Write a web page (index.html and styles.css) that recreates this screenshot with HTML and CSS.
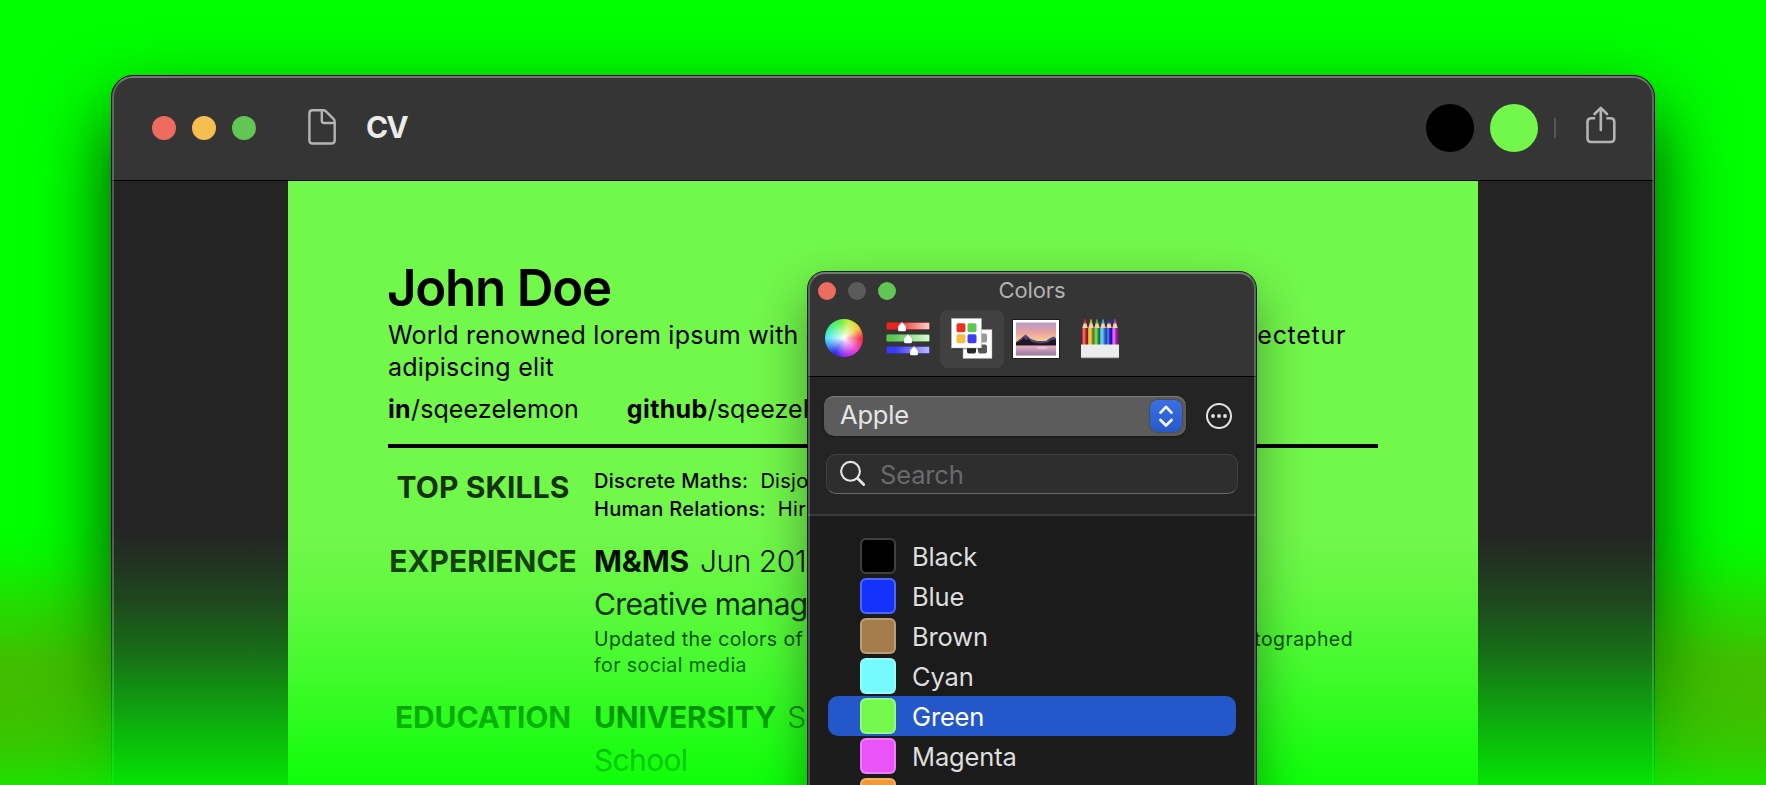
FILE: index.html
```html
<!DOCTYPE html>
<html lang="en">
<head>
<meta charset="utf-8">
<title>CV</title>
<link rel="stylesheet" href="styles.css">
</head>
<body>
<main class="stage">
  <section class="window">
    <header class="titlebar">
      <div class="lights"><i class="red"></i><i class="yellow"></i><i class="green"></i></div>
      <svg class="doc-icon" width="28" height="36" viewBox="0 0 28 36" fill="none" stroke="#b4b4b4" stroke-width="2.4" stroke-linejoin="round"><path d="M4.600 1.300H15.500C16.500 1.300 17.300 1.600 18 2.300L25.700 10.200C26.400 10.900 26.700 11.700 26.700 12.700V31.300Q26.700 34.500 23.500 34.500H4.600Q1.400 34.500 1.400 31.300V4.500Q1.400 1.300 4.600 1.300Z"/><path d="M13.800 1.500V11.400Q13.800 14 16.400 14H26.500"/></svg>
      <h1 class="window-title">CV</h1>
      <div class="tools">
        <span class="dot black"></span>
        <span class="dot lime"></span>
        <span class="divider"></span>
        <svg class="share-icon" width="30" height="38" viewBox="0 0 30 38" fill="none" stroke="#b4b4b4" stroke-width="2.600" stroke-linecap="round" stroke-linejoin="round"><path d="M9.200 12.300H5.300Q1.500 12.300 1.500 16V32.200Q1.500 36 5.300 36H24.500Q28.300 36 28.300 32.200V16Q28.300 12.300 24.500 12.300H20.400" stroke-linecap="butt"/><path d="M14.800 24V2.200M8.600 8L14.800 1.800L21 8"/></svg>
      </div>
    </header>
    <div class="canvas">
      <article class="page">
        <h2 class="name">John Doe</h2>
        <p class="intro"><span class="spread"><span>World renowned lorem ipsum with dolor sit</span><span class="tail">consectetur</span></span>adipiscing elit</p>
        <p class="links"><span><b>in</b>/sqeezelemon</span><span><b>github</b>/sqeezelemon</span></p>
        <hr class="rule">
        <div class="row skills">
          <h3 class="label">TOP SKILLS</h3>
          <div class="details">
            <p><b>Discrete Maths:</b><span>Disjoint sets</span></p>
            <p><b>Human Relations:</b><span>Hiring</span></p>
          </div>
        </div>
        <div class="row experience">
          <h3 class="label">EXPERIENCE</h3>
          <div class="details">
            <p class="heading"><b>M&amp;MS</b><span>Jun 2017</span></p>
            <p class="role">Creative manager</p>
            <p class="note"><span class="spread"><span>Updated the colors of candy</span><span>photographed</span></span>for social media</p>
          </div>
        </div>
        <div class="row education">
          <h3 class="label">EDUCATION</h3>
          <div class="details">
            <p class="heading"><b>UNIVERSITY</b><span>Sciences</span></p>
            <p class="role">School</p>
          </div>
        </div>
      </article>
    </div>
  </section>
  <div class="fade"></div>

  <aside class="picker">
    <header class="picker-head">
      <div class="picker-title">
        <div class="lights small"><i class="red"></i><i class="gray"></i><i class="green"></i></div>
        <h2>Colors</h2>
      </div>
      <nav class="tabs">
        <span class="tab"><i class="wheel"></i></span>
        <span class="tab"><svg width="46" height="42" viewBox="0 0 46 42">
          <defs>
            <linearGradient id="sr"><stop offset="0.250" stop-color="#e8281e"/><stop offset="1" stop-color="#f7d5d3"/></linearGradient>
            <linearGradient id="sg"><stop offset="0.150" stop-color="#5cc753"/><stop offset="1" stop-color="#dcf9da"/></linearGradient>
            <linearGradient id="sb"><stop offset="0.200" stop-color="#3a3cf2"/><stop offset="1" stop-color="#bcbcf8"/></linearGradient>
            <path id="knob" d="M0 0L4 4.500V8Q4 9.300 2.500 9.300H-2.500Q-4 9.300 -4 8V4.500Z" fill="#fff" stroke="#555" stroke-opacity=".35" stroke-width=".5"/>
          </defs>
          <rect x="1.500" y="4.500" width="43" height="7" rx="1.200" fill="url(#sr)" stroke="#a61f1a" stroke-opacity=".55"/>
          <rect x="1.500" y="16.500" width="43" height="7" rx="1.200" fill="url(#sg)" stroke="#3c9437" stroke-opacity=".55"/>
          <rect x="1.500" y="28.500" width="43" height="7" rx="1.200" fill="url(#sb)" stroke="#2a2bb4" stroke-opacity=".55"/>
          <use href="#knob" x="17" y="4"/><use href="#knob" x="23" y="16"/><use href="#knob" x="29" y="28"/>
        </svg></span>
        <span class="tab active"><svg width="42" height="42" viewBox="0 0 42 42">
          <rect x="12" y="11.500" width="29" height="29" fill="#fff" stroke="#999" stroke-width=".5"/>
          <rect x="16" y="16" width="9" height="9" rx="2" fill="#111"/><rect x="27" y="15.500" width="9" height="9" rx="2" fill="#9a9a9d"/>
          <rect x="16" y="26.500" width="9" height="9" rx="2" fill="#28282a"/><rect x="27" y="26.500" width="9" height="9" rx="2" fill="#58585b"/>
          <rect x="1" y="1.500" width="30" height="30" fill="#000" opacity=".3"/>
          <rect x=".500" y=".500" width="30" height="29.500" fill="#fff" stroke="#bbb" stroke-width=".5"/>
          <rect x="5.500" y="5.300" width="9" height="9" rx="1.800" fill="#ea3323"/><rect x="16.500" y="5.300" width="9" height="9" rx="1.800" fill="#5cc753"/>
          <rect x="5.500" y="16.300" width="9" height="9" rx="1.800" fill="#f5bf42"/><rect x="16.500" y="16.300" width="9" height="9" rx="1.800" fill="#3e3ef5"/>
        </svg></span>
        <span class="tab"><svg width="48" height="40" viewBox="0 0 48 40">
          <defs><linearGradient id="sky" x2="0" y2="1"><stop offset="0" stop-color="#b99acb"/><stop offset=".5" stop-color="#e9a2a0"/><stop offset="1" stop-color="#fbd98c"/></linearGradient>
          <linearGradient id="sea" x2="0" y2="1"><stop offset="0" stop-color="#eeb6c6"/><stop offset="1" stop-color="#96739c"/></linearGradient></defs>
          <rect x=".500" y=".500" width="47" height="39" fill="#fff" stroke="#1c1c1c"/>
          <rect x="4" y="3.500" width="40" height="20" fill="url(#sky)"/>
          <rect x="4" y="26" width="40" height="10.500" fill="url(#sea)"/>
          <path d="M4 23L8 20L13.500 15.500L19 20L25 22L34 22L38 19L42 17.500L44 19V26H4Z" fill="#57437c"/>
          <path d="M4 24L9 21.500L12 18.500L14 21.500L16 19.500L20 23L28 24.500L36 23.500L39 21L44 20.500V26.500H4Z" fill="#1c1921"/>
          <ellipse cx="30" cy="29" rx="6" ry="1.500" fill="#fff" opacity=".3"/>
        </svg></span>
        <span class="tab"><svg width="40" height="42" viewBox="0 0 40 42">
          <defs><g id="pencil"><path d="M0 11L2.200 3.500H3.800L6 11Z" fill="#f0d3ad"/><path d="M1.800 5.500L2.300 1.500Q3 .8 3.700 1.500L4.200 5.500Z" fill="currentColor"/><rect x="0" y="10" width="6" height="17" fill="currentColor"/><rect x="4.300" y="10" width="1.700" height="17" fill="#000" opacity=".4"/><rect x="1.200" y="10" width="1.600" height="17" fill="#fff" opacity=".35"/></g></defs>
          <use href="#pencil" x="2" color="#d5302a"/><use href="#pencil" x="8" color="#cfae2d"/><use href="#pencil" x="14" color="#41b934"/><use href="#pencil" x="20" color="#3fa9f0"/><use href="#pencil" x="26" color="#1b33ee"/><use href="#pencil" x="32" color="#cf2be2"/>
          <rect x="1" y="26.500" width="38" height="13.500" fill="#ececec"/><rect x="1" y="39" width="38" height="1.200" fill="#b5b5b5"/>
        </svg></span>
      </nav>
    </header>
    <div class="controls">
      <div class="select-row">
        <div class="select"><span>Apple</span>
          <span class="stepper"><svg width="32" height="32" viewBox="0 0 32 32" fill="none" stroke="#f0f3fb" stroke-width="2.800" stroke-linecap="round" stroke-linejoin="round"><path d="M10.500 12.600L16 6.900L21.500 12.600M10.500 20L16 25.600L21.500 20"/></svg></span>
        </div>
        <svg class="more" width="28" height="28" viewBox="0 0 28 28"><circle cx="14" cy="14" r="12" fill="none" stroke="#e4e4e4" stroke-width="2"/><g fill="#e4e4e4"><circle cx="8" cy="14" r="1.900"/><circle cx="14" cy="14" r="1.900"/><circle cx="20" cy="14" r="1.900"/></g></svg>
      </div>
      <div class="search">
        <svg width="28" height="28" viewBox="0 0 28 28" fill="none" stroke="#e4e4e4" stroke-linecap="round"><circle cx="11.500" cy="11.300" r="9.400" stroke-width="2.100"/><path d="M18.500 18.300L24.700 24.500" stroke-width="2.900"/></svg>
        <span>Search</span>
      </div>
    </div>
    <ul class="list">
      <li><i class="chip c-black"></i><span>Black</span></li>
      <li><i class="chip c-blue"></i><span>Blue</span></li>
      <li><i class="chip c-brown"></i><span>Brown</span></li>
      <li><i class="chip c-cyan"></i><span>Cyan</span></li>
      <li class="selected"><i class="chip c-green"></i><span>Green</span></li>
      <li><i class="chip c-magenta"></i><span>Magenta</span></li>
      <li><i class="chip c-orange"></i></li>
    </ul>
  </aside>
</main>
</body>
</html>
```
FILE: styles.css
```css
* { box-sizing: border-box; margin: 0; padding: 0; }
body { width: 1766px; height: 785px; overflow: hidden; background: #0f0; font-family: Inter, "Liberation Sans", sans-serif; }
i { font-style: normal; }

.stage {
  position: relative; width: 1766px; height: 785px; overflow: hidden; padding: 75px 111px 0;
  background: linear-gradient(to bottom, #0f0 0, #0f0 525px, rgb(4,251,0) 545px, rgb(12,243,0) 565px, rgb(26,229,0) 585px, rgb(42,213,0) 605px, rgb(64,191,0) 630px, rgb(100,155,0) 660px, rgb(138,117,0) 700px, rgb(195,60,0) 750px, rgb(240,15,0) 790px);
}

/* Document window */
.window { position: relative; height: 900px; border: 1px solid #000; border-radius: 22px; background: #242424; box-shadow: 0 36px 76px rgba(0,0,0,.76); }
.window::after, .picker::after {
  content: ""; position: absolute; inset: 0; border: 2px solid rgba(255,255,255,.23); border-top-color: rgba(255,255,255,.33); border-radius: 21px; pointer-events: none;
}
.titlebar { height: 105px; display: flex; align-items: center; padding: 0 38px 0 40px; background: #353535; border-bottom: 1px solid #000; border-radius: 21px 21px 0 0; }
.lights { display: flex; gap: 16px; }
.lights i { width: 24px; height: 24px; border-radius: 50%; }
.lights .red { background: #ed6b5f; }
.lights .yellow { background: #f5bf4f; }
.lights .green { background: #62c655; }
.lights .gray { background: #5b5b5b; }
.doc-icon { margin: -3px 0 0 52px; }
.window-title { margin: -2px 0 0 30px; font-size: 30px; line-height: 36px; font-weight: 700; color: #ebebeb; letter-spacing: -2px; }
.tools { margin-left: auto; display: flex; align-items: center; }
.dot { width: 48px; height: 48px; border-radius: 50%; margin-right: 16px; }
.dot.black { background: #000; }
.dot.lime { background: #72f74b; }
.divider { width: 2px; height: 20px; background: #565656; margin-right: 30px; }
.share-icon { margin-top: -7px; }

.canvas { display: flex; justify-content: center; }
.page { width: 1190px; height: 780px; padding: 77px 100px 0; background: #72f74b; color: #000; }
.name { font-size: 51px; line-height: 60px; font-weight: 600; letter-spacing: -1.25px; margin-left: -1px; }
.intro { position: relative; top: 1px; font-size: 25px; line-height: 32px; letter-spacing: .25px; }
.spread { display: flex; justify-content: space-between; white-space: nowrap; }
.intro .spread { width: 958px; }
.intro .tail { letter-spacing: .7px; }
.links { display: flex; gap: 48px; margin-top: 11px; font-size: 25px; line-height: 32px; letter-spacing: .1px; }
.links b { font-weight: 700; letter-spacing: .35px; }
.rule { height: 4px; margin-top: 19px; border: 0; background: #000; }
.row { display: grid; grid-template-columns: 190px 1fr; column-gap: 16px; }
.label { font-size: 30px; line-height: 36px; font-weight: 700; text-align: center; opacity: .8; white-space: nowrap; }
.skills { margin-top: 19px; height: 73px; font-size: 20px; line-height: 28px; letter-spacing: .3px; }
.skills .label { margin-top: 2px; letter-spacing: .1px; }
.skills p { display: flex; gap: 12px; }
.skills b { font-weight: 500; }
.experience { height: 156px; }
.experience .label, .education .label { line-height: 42px; }
.education .label { letter-spacing: -.15px; }
.heading { display: flex; gap: 11px; font-size: 30px; line-height: 42px; letter-spacing: -.15px; }
.heading span { font-weight: 300; letter-spacing: -.5px; }
.role { font-size: 30px; line-height: 42px; padding-top: 1px; height: 43px; letter-spacing: -.65px; }
.note { margin-top: 1px; font-size: 19.5px; line-height: 26px; letter-spacing: .42px; }
.note .spread { width: 759px; }

/* Everything in the document dissolves into the backdrop */
.fade {
  position: absolute; inset: 0;
  background: linear-gradient(to bottom, rgba(0,255,0,0) 530px, rgba(0,255,0,.05) 555px, rgba(0,255,0,.16) 600px, rgba(0,255,0,.37) 660px, rgba(0,255,0,.64) 725px, rgba(0,255,0,.88) 785px);
}

/* Colour picker floats above the document */
.picker { position: absolute; left: 807px; top: 271px; width: 450px; height: 620px; border: 1px solid rgba(0,0,0,.85); border-radius: 18px; background: #1b1b1b; background-clip: padding-box; color: #dedede; box-shadow: 0 22px 50px rgba(0,0,0,.38); }
.picker::after { border-radius: 17px; }
.picker-head { height: 105px; background: #353535; border-bottom: 1px solid #000; border-radius: 17px 17px 0 0; }
.picker-title { display: grid; grid-template-columns: 94px 1fr 94px; align-items: center; height: 38px; padding-left: 10px; }
.picker-title h2 { margin: -2px 0 0 -10px; font-size: 22px; line-height: 26px; font-weight: 400; color: #b1b1b1; text-align: center; letter-spacing: -.1px; }
.lights.small { gap: 12px; }
.lights.small i { width: 18px; height: 18px; }
.tabs { display: flex; padding-left: 4px; }
.tab { width: 64px; height: 58px; display: flex; align-items: center; justify-content: center; border-radius: 8px; }
.tab.active { background: #414141; }
.wheel { width: 38px; height: 38px; border-radius: 50%; margin-top: -2px; background: radial-gradient(circle, #fff 0, rgba(255,255,255,.65) 18%, rgba(255,255,255,.1) 56%, rgba(255,255,255,0) 66%), conic-gradient(from 90deg, #f0303c, #ee3cd8 12.5%, #a92df0 23%, #2b2bf0 34%, #4fe6fa 50%, #3cf0a0 59%, #5af03c 71%, #c4f03c 80%, #f5c83c 90%, #f0303c); }
.controls { height: 139px; padding: 19px 16px 0; background: #242424; border-bottom: 2px solid #3b3b3b; }
.select-row { display: flex; align-items: center; }
.select { width: 362px; height: 40px; display: flex; align-items: center; justify-content: space-between; padding: 0 4px 0 16px; border-radius: 10px; background: #5c5c5c; box-shadow: inset 0 1px 0 #7b7b7b, 0 1px 2px rgba(0,0,0,.4); font-size: 25.5px; letter-spacing: -.2px; color: #e6e6e6; }
.select > span:first-child { margin-top: -4px; }
.stepper { width: 32px; height: 32px; border-radius: 8px; background: linear-gradient(#3a70e4, #2759c8); box-shadow: 0 0 2px rgba(0,0,0,.5); }
.more { margin-left: 19px; }
.search { display: flex; align-items: center; gap: 13px; width: 412px; height: 40px; margin: 18px 0 0 2px; padding-left: 12px; border: 1px solid #404040; border-bottom-color: #6a6a6a; border-radius: 10px; background: #2e2e2e; font-size: 25.5px; letter-spacing: -.15px; color: #6a6a6a; }
.search span { margin-top: 1px; }
.list { list-style: none; padding: 20px 20px 0; }
.list li { display: flex; align-items: center; gap: 16px; height: 40px; padding-left: 32px; border-radius: 10px; font-size: 25.5px; letter-spacing: -.15px; }
.list span { padding-top: 1px; }
.list .selected { background: #2458ca; color: #fff; }
.chip { width: 36px; height: 36px; border: 2px solid rgba(255,255,255,.25); border-radius: 6px; }
.c-black { background: #000; }
.c-blue { background: #1432fa; }
.c-brown { background: #a57c4b; }
.c-cyan { background: #75fbfd; }
.c-green { background: #74f84c; }
.c-magenta { background: #ea53f8; }
.c-orange { background: #f19937; }
```
